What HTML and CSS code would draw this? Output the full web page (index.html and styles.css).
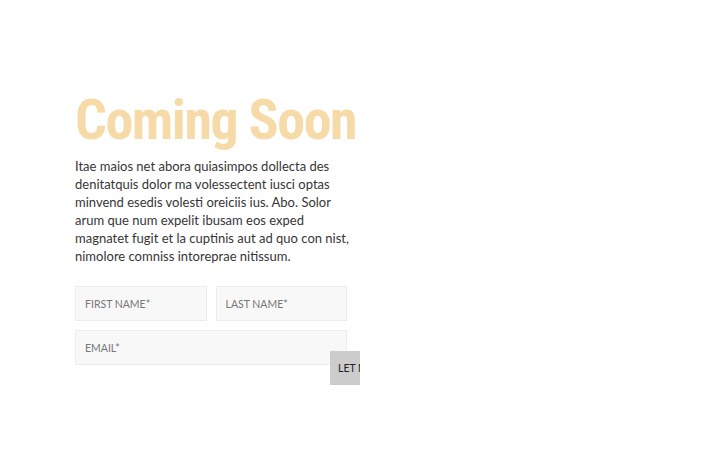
FILE: index.html
```html
<!DOCTYPE html>
<html>
<head>
<meta charset="utf-8">
<link rel="stylesheet" href="styles.css">
</head>
<body>
<main class="page">
  <section class="panel">
    <h1 class="title">Coming Soon</h1>
    <p class="lead">Itae maios net abora quiasimpos dollecta des denitatquis dolor ma volessectent iusci optas minvend esedis volesti oreiciis ius. Abo. Solor arum que num expelit ibusam eos exped magnatet fugit et la cuptinis aut ad quo con nist, nimolore comniss intoreprae nitissum.</p>
    <form class="form">
      <div class="row">
        <div class="field">FIRST NAME*</div>
        <div class="field">LAST NAME*</div>
      </div>
      <div class="field wide">EMAIL*</div>
      <div class="btn">LET ME KNOW</div>
    </form>
  </section>
</main>
</body>
</html>
```
FILE: styles.css
```css
html, body { margin: 0; padding: 0; background: #fff; }
body { width: 720px; height: 450px; overflow: hidden; font-family: Lato, "Liberation Sans", sans-serif; }
.page { padding: 88px 0 0 75px; }
.panel { width: 285px; overflow: hidden; position: relative; height: 300px; }
.title {
  margin: 0;
  font-family: "Roboto Condensed", "Liberation Sans Narrow", sans-serif;
  font-weight: 700;
  font-size: 56px;
  line-height: 64px;
  color: #f6dba8;
  letter-spacing: -1.5px;
  white-space: nowrap;
}
.lead {
  margin: 5px 0 0;
  width: 277px;
  font-size: 13px;
  line-height: 18px;
  color: #363636;
}
.form { margin-top: 21px; width: 272px; }
.row { display: flex; gap: 9px; margin-bottom: 9px; }
.field {
  flex: 1;
  height: 35px;
  box-sizing: border-box;
  border: 1px solid #ececec;
  background: #f8f8f8;
  font-size: 10.5px;
  color: #777;
  padding-left: 9px;
  display: flex;
  align-items: center;
}
.wide { width: 272px; }
.btn {
  position: absolute;
  left: 255px;
  top: 263px;
  width: 100px;
  height: 34px;
  background: #cccccc;
  color: #222;
  font-size: 10.5px;
  display: flex;
  align-items: center;
  padding-left: 8px;
  white-space: nowrap;
  box-sizing: border-box;
}
```
